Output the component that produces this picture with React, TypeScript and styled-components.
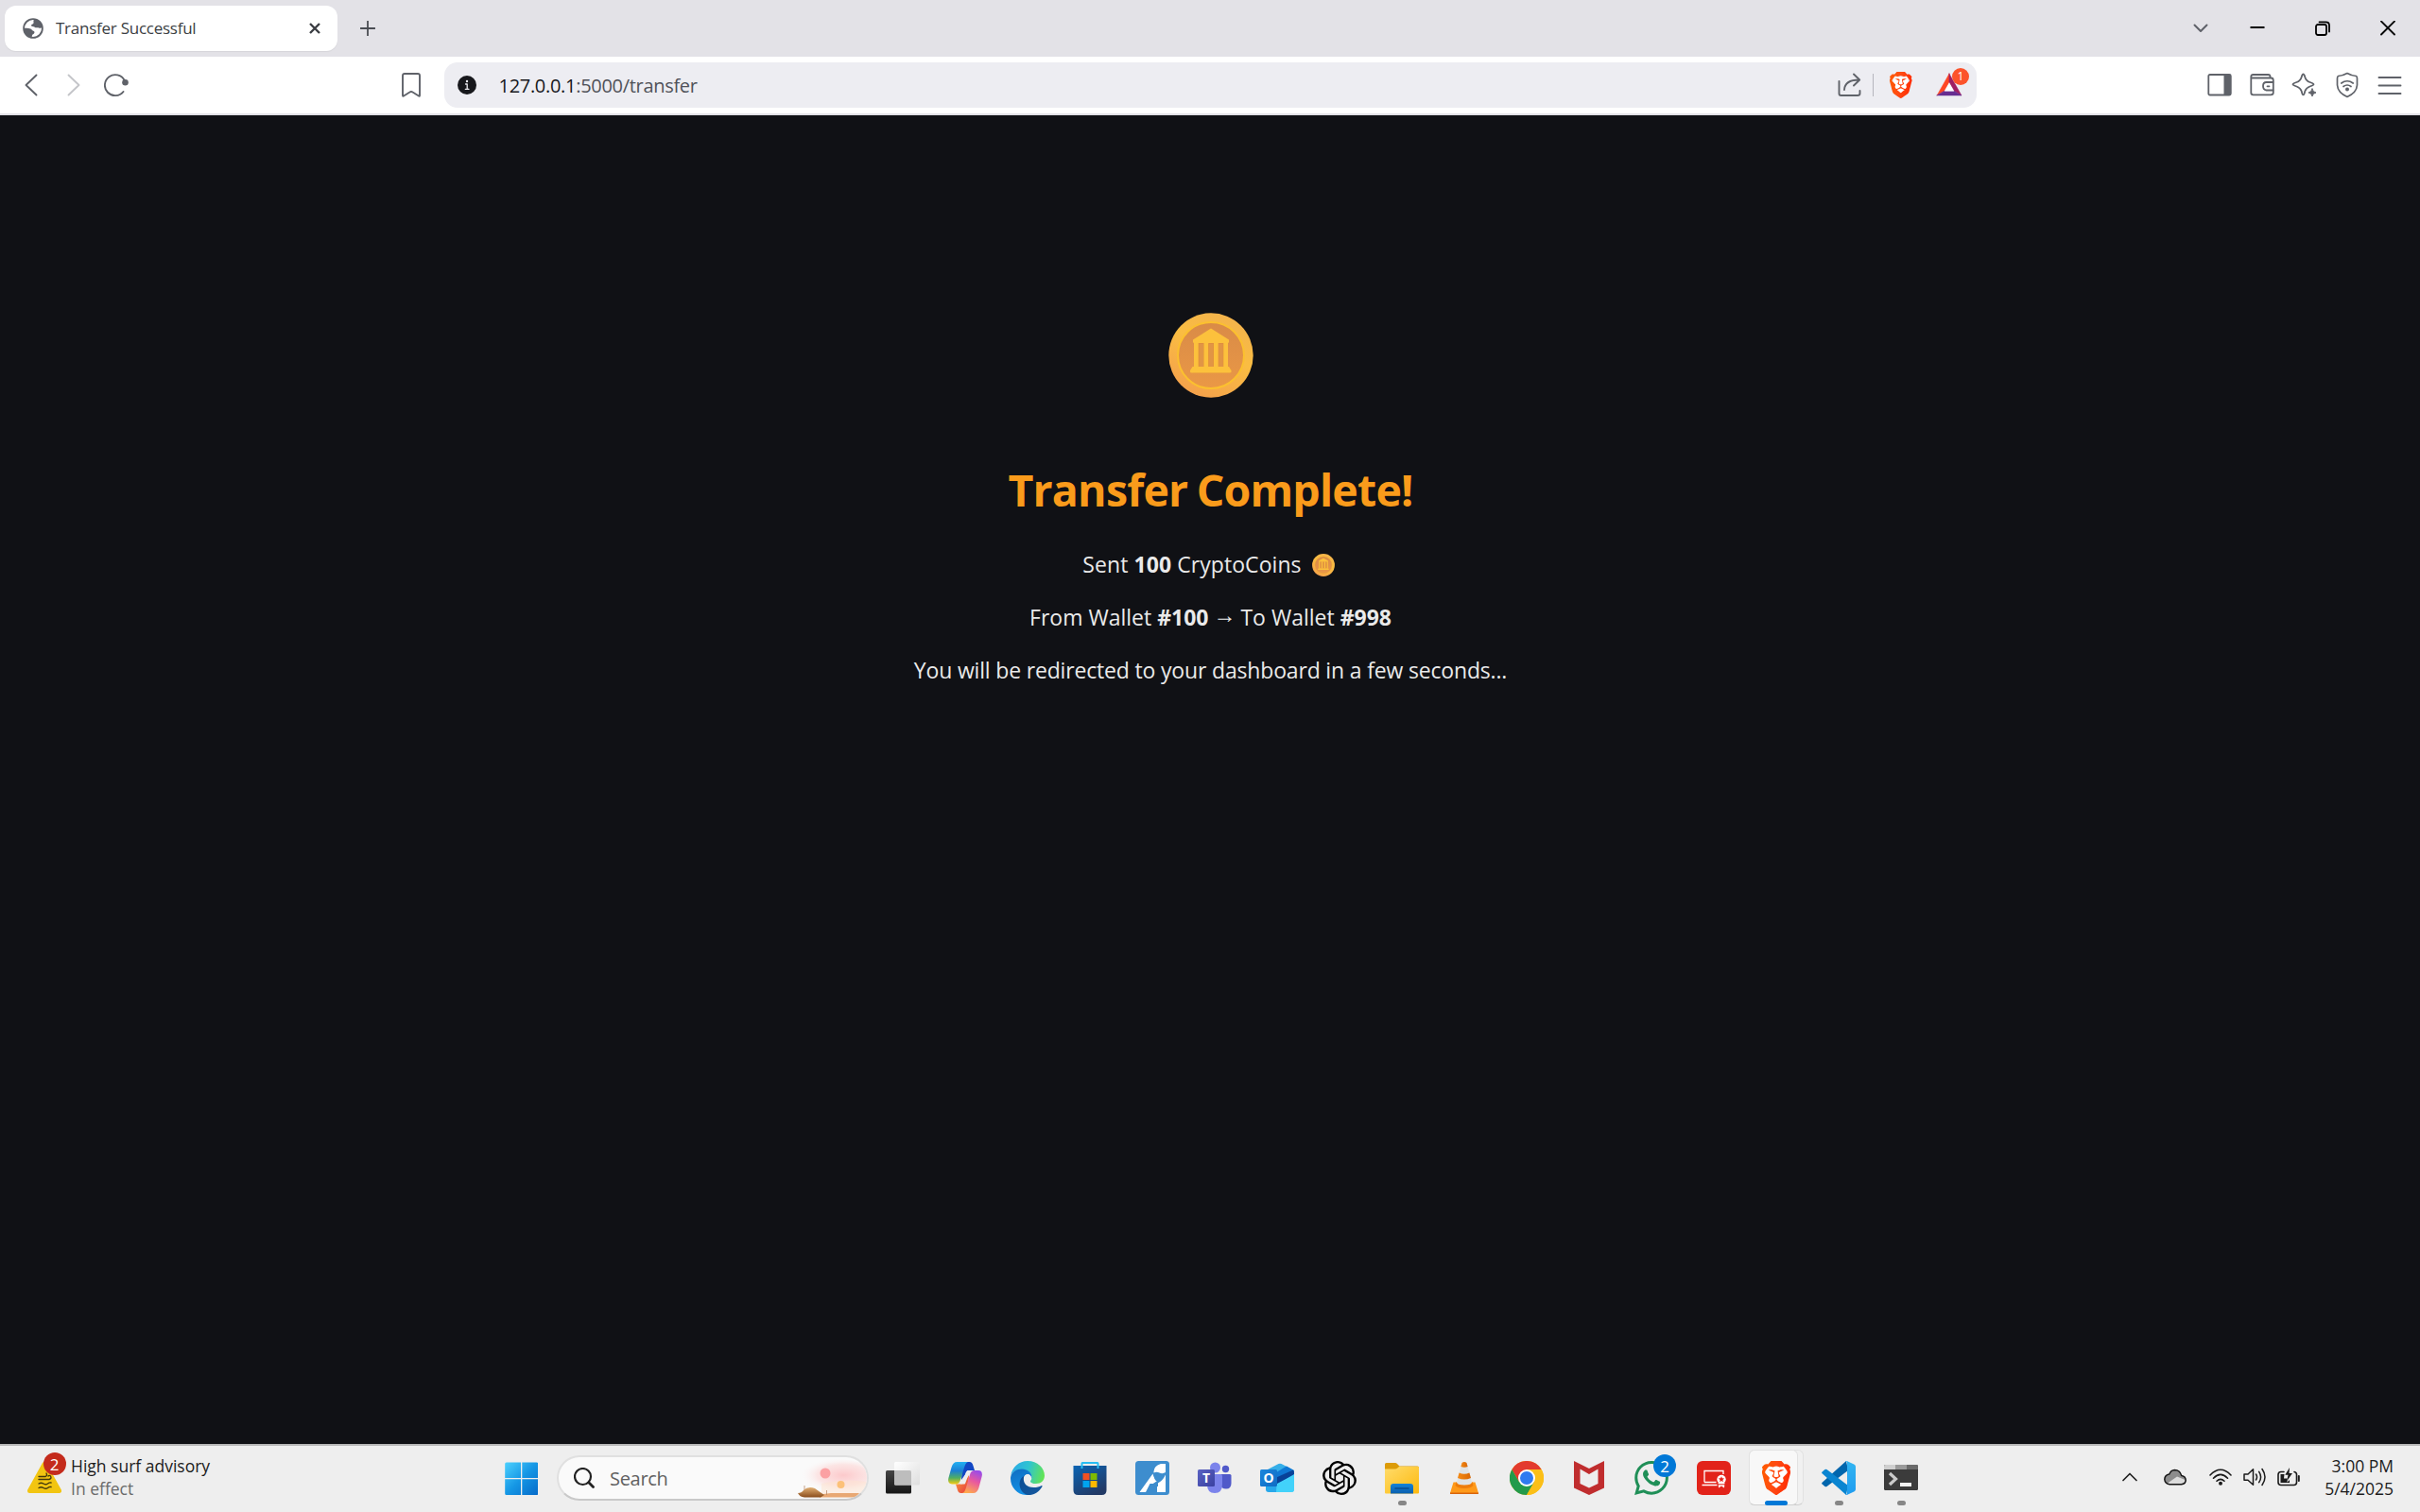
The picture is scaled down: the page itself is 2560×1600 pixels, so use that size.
import React from "react";
import styled, { createGlobalStyle, css } from "styled-components";
import { SiBrave, SiOpenai, SiWhatsapp } from "react-icons/si";

const GlobalStyle = createGlobalStyle`
  * { box-sizing: border-box; }
  body {
    margin: 0;
    background: #101115;
    font-family: "Open Sans", "Noto Sans", sans-serif;
    font-variant-ligatures: none;
  }
  svg { display: block; flex: none; }
`;

const Screen = styled.div`
  width: 2560px;
  height: 1600px;
  display: flex;
  flex-direction: column;
  overflow: hidden;
`;

/* ---------- browser chrome ---------- */

const TabStrip = styled.header`
  height: 60px;
  flex: none;
  display: flex;
  align-items: center;
  background: #e3e2e7;
  padding-left: 4.5px;
`;

const Tab = styled.div`
  width: 352.5px;
  height: 48px;
  display: flex;
  align-items: center;
  gap: 13px;
  padding: 0 18px 0 19.5px;
  border-radius: 12px;
  background: #fff;
  box-shadow: 0 1px 1px rgba(0, 0, 0, 0.06);
`;

const TabTitle = styled.span`
  flex: 1;
  padding-bottom: 2px;
  font-size: 17px;
  letter-spacing: -0.25px;
  color: #3b3e43;
  white-space: nowrap;
`;

const NewTab = styled.div`
  margin-left: 24px;
`;

const WindowControls = styled.div`
  margin-left: auto;
  display: flex;
  height: 100%;
`;

const ControlCell = styled.div<{ $width: number }>`
  width: ${(p) => p.$width}px;
  display: grid;
  place-items: center;
`;

const Toolbar = styled.nav`
  height: 62px;
  flex: none;
  display: flex;
  align-items: center;
  background: #fff;
  border-bottom: 2px solid #e2e1e6;
  padding: 0 9.5px 0 10.5px;
`;

const ToolGroup = styled.div<{ $end?: boolean }>`
  display: flex;
  ${(p) =>
    p.$end &&
    css`
      margin-left: auto;
    `}
`;

const ToolButton = styled.div`
  width: 45px;
  height: 48px;
  display: grid;
  place-items: center;
`;

const BookmarkSlot = styled(ToolButton)`
  margin: 0 12.5px 0 267px;
`;

const AddressBar = styled.div`
  width: 1621px;
  height: 48px;
  display: flex;
  align-items: center;
  padding: 0 15px 0 14px;
  border-radius: 14px;
  background: #ededf2;
`;

const Url = styled.span`
  flex: 1;
  margin-left: 23.5px;
  font-size: 20px;
  letter-spacing: -0.3px;
  color: #505259;
`;

const Host = styled.span`
  color: #17181c;
`;

const Divider = styled.i`
  width: 1px;
  height: 24px;
  margin: 0 15px 0 10px;
  background: #b5b5bd;
`;

const RewardsSlot = styled.div`
  position: relative;
  margin-left: 23px;
`;

const Badge = styled.span<{ $size: number; $x: number; $y: number; $bg: string; $font: number }>`
  position: absolute;
  left: ${(p) => p.$x - p.$size / 2}px;
  top: ${(p) => p.$y - p.$size / 2}px;
  width: ${(p) => p.$size}px;
  height: ${(p) => p.$size}px;
  border-radius: 50%;
  display: grid;
  place-items: center;
  background: ${(p) => p.$bg};
  color: #fff;
  font-size: ${(p) => p.$font}px;
  line-height: 1;
`;

/* ---------- page ---------- */

const Page = styled.main`
  flex: 1;
  display: flex;
  flex-direction: column;
  align-items: center;
  padding: 209px 0 0 1px;
  background: #101115;
  color: #eaeaea;
`;

const Title = styled.h1`
  margin: 65px 0 31px;
  font-size: 46.5px;
  line-height: 64px;
  font-weight: 700;
  letter-spacing: -0.8px;
  word-spacing: -2px;
  color: #fa9b1b;
`;

const Line = styled.p<{ $track?: number }>`
  margin: 0 0 24px;
  font-size: 23px;
  line-height: 32px;
  letter-spacing: ${(p) => p.$track ?? 0}px;
  white-space: nowrap;
`;

const InlineCoin = styled.span`
  display: inline-block;
  margin: 0 4px 0 5px;
  vertical-align: -4px;
`;

const Arrow = styled.span`
  display: inline-block;
  font-family: "Liberation Sans", sans-serif;
  font-size: 24px;
  width: 22px;
  line-height: 1;
  text-indent: -1px;
  vertical-align: 3px;
`;

/* ---------- taskbar ---------- */

const Taskbar = styled.footer`
  height: 72px;
  flex: none;
  display: grid;
  grid-template-columns: 518px 1fr auto;
  background: #eeeeee;
  border-top: 2px solid #b9b9b9;
`;

const Widget = styled.div`
  display: flex;
  align-items: center;
  gap: 10px;
  padding: 0 0 4px 29px;
`;

const IconBox = styled.div`
  position: relative;
  width: 36px;
  height: 36px;
`;

const Stack = styled.div<{ $right?: boolean }>`
  font-size: 17.5px;
  line-height: 24px;
  color: #1c1c1c;
  white-space: nowrap;
  ${(p) =>
    p.$right &&
    css`
      text-align: right;
      width: 93px;
    `}
`;

const Muted = styled.div`
  color: #6b6b6b;
`;

const AppRow = styled.div`
  display: flex;
  align-items: center;
`;

const AppCell = styled.div`
  position: relative;
  width: 66px;
  height: 70px;
  display: grid;
  place-items: center;
  padding-bottom: 2px;
`;

const Indicator = styled.i<{ $active?: boolean }>`
  position: absolute;
  bottom: 7px;
  left: ${(p) => (p.$active ? 21 : 28.5)}px;
  width: ${(p) => (p.$active ? 24 : 9)}px;
  height: 5px;
  border-radius: 3px;
  background: ${(p) => (p.$active ? "#0078d7" : "#868686")};
`;

const Card = styled.i<{ $back?: boolean }>`
  position: absolute;
  top: 4px;
  left: 4px;
  width: ${(p) => (p.$back ? 58 : 51.5)}px;
  height: 59px;
  border-radius: 6px;
  border: 1px solid #e2e2e2;
  border-bottom-color: #d0d0d0;
  background: ${(p) => (p.$back ? "#f1f1f1" : "#f8f8f8")};
`;

const Front = styled.div`
  position: relative;
`;

const SearchBox = styled.div`
  width: 330px;
  height: 48px;
  margin: 0 3px 2px 5px;
  display: flex;
  align-items: center;
  padding-left: 16px;
  border-radius: 24px;
  border: 2px solid #e0e0e0;
  border-bottom-color: #c9c9c9;
  background: #fafafa;
  overflow: hidden;
`;

const SearchText = styled.span`
  flex: 1;
  margin-left: 16px;
  font-size: 20px;
  letter-spacing: -0.3px;
  color: #616161;
`;

const Tray = styled.div`
  display: flex;
  align-items: center;
  padding: 0 28px 4px 0;
`;

const TrayCell = styled.div<{ $width: number; $gap?: number }>`
  width: ${(p) => p.$width}px;
  margin-right: ${(p) => p.$gap ?? 0}px;
  display: grid;
  place-items: center;
`;

/* ---------- icons ---------- */

const Svg = ({ w, h = w, children }: { w: number; h?: number; children: React.ReactNode }) => (
  <svg width={w} height={h} viewBox={`0 0 ${w} ${h}`} fill="none" strokeLinecap="round" strokeLinejoin="round">
    {children}
  </svg>
);

const GREY = "#5f6269";

const Coin = ({ size }: { size: number }) => (
  <svg width={size} height={size} viewBox="0 0 90 90">
    <defs>
      <linearGradient id="rim" x1="0.8" y1="0" x2="0.3" y2="1">
        <stop offset="0" stopColor="#f3b24d" />
        <stop offset="0.45" stopColor="#fabd42" />
        <stop offset="1" stopColor="#f4a04c" />
      </linearGradient>
      <linearGradient id="face" x1="0" y1="0" x2="0" y2="1">
        <stop offset="0" stopColor="#d98b47" />
        <stop offset="1" stopColor="#ea9846" />
      </linearGradient>
    </defs>
    <circle cx="45" cy="45" r="44.7" fill="url(#rim)" />
    <circle cx="45" cy="45" r="35" fill="url(#face)" stroke="#fbc02f" strokeWidth="2" />
    <g fill="#e08a2b" transform="translate(1 1.4)">
      <path d="M28 31 H62 V56 L65 58 V62 H25 V58 L28 56Z" opacity="0.45" />
    </g>
    <g fill="#fcc13c">
      <path d="M45 16.500 L64 28.500 V31 Q64 32 62.500 32 H27.500 Q26 32 26 31 V28.500Z" />
      <path d="M27 31h4.700v26H27zM37.500 31h4.700v26h-4.700zM48 31h4.700v26H48zM58.300 31h4.700v26h-4.700z" />
      <path d="M25.500 57 H64 L66.500 61 V62.500 Q66.500 63.500 65 63.500 H24.500 Q23 63.500 23 62.500 V61Z" />
    </g>
    <g fill="#e19545">
      <path d="M32.500 33h4.500v24h-4.500zM43 33h4.500v24H43zM53.300 33h4.500v24h-4.500z" />
    </g>
  </svg>
);

const Globe = () => (
  <Svg w={22}>
    <circle cx="11" cy="11" r="9.900" fill="#fff" stroke={GREY} strokeWidth="1.800" />
    <path
      d="M12.500 1.500C10.500 3 12 4.200 11.500 5.500C11 7 8.800 6.500 9 8C9.300 9.300 11.500 8.500 12.800 9.800C13.800 11 15.500 9.800 17 10.500C18.500 11.200 20 10.500 20.800 9.500C20 5 16.500 1.800 12.500 1.500Z"
      fill={GREY}
    />
    <path
      d="M1.200 11C3.500 10.500 6.500 10.600 8.300 11.500C10 12.300 9.700 13.300 11.300 13.800C13.300 14.500 12.500 16.800 11 17.200C9.800 17.600 9.800 19.500 9.500 20.700C4.800 20.200 1.200 16 1.200 11Z"
      fill={GREY}
    />
  </Svg>
);

const BraveLion = ({ w, h, id }: { w: number; h: number; id: string }) => (
  <svg width={w} height={h} viewBox="0 0 30 36">
    <defs>
      <linearGradient id={id} x1="0" y1="0.4" x2="1" y2="0.6">
        <stop offset="0" stopColor="#ff5a00" />
        <stop offset="0.45" stopColor="#ff4a14" />
        <stop offset="1" stopColor="#ff2a00" />
      </linearGradient>
    </defs>
    <path d="M6 7 L24 7 L25 20 L21 27 L15 31 L9 27 L5 20Z" fill="#fff" />
    <SiBrave x="-3" y="0" size={36} style={{ fill: `url(#${id})` }} />
  </svg>
);

const Bat = () => (
  <Svg w={28}>
    <path d="M14 2 L1 25 L8.500 20.500 L14 11Z" fill="#ff4724" stroke="#ff4724" strokeWidth="0.500" />
    <path d="M14 2 L27 25 L19.500 20.500 L14 11Z" fill="#9e1f63" stroke="#9e1f63" strokeWidth="0.500" />
    <path d="M1 25 H27 L19.500 20.500 H8.500Z" fill="#662d91" stroke="#662d91" strokeWidth="0.500" />
    <path d="M14 11.500 L19 20.500 H9Z" fill="#fff" />
  </Svg>
);

const StartIcon = () => (
  <svg width={36} height={36} viewBox="0 0 36 36">
    <defs>
      <linearGradient id="win" x1="0" y1="0" x2="36" y2="36" gradientUnits="userSpaceOnUse">
        <stop offset="0" stopColor="#4fd3ff" />
        <stop offset="0.5" stopColor="#1597e5" />
        <stop offset="1" stopColor="#0669c8" />
      </linearGradient>
    </defs>
    <g fill="url(#win)" transform="translate(0.7 0.5)">
      <path d="M2 1h15.300v16.500H.5v-15Q.5 1 2 1zM18.600 1H34q1.500 0 1.500 1.500v15H18.600zM.5 18.800h16.800V35.500H2Q.5 35.500.5 34zM18.600 18.800h16.900V34q0 1.500-1.500 1.500H18.600z" />
    </g>
  </svg>
);

const SearchArt = () => (
  <svg width={78} height={44} viewBox="0 0 78 44">
    <defs>
      <radialGradient id="haze" cx="0.6" cy="0.45" r="0.5">
        <stop offset="0" stopColor="#fcc9cb" />
        <stop offset="0.6" stopColor="#fce0df" stopOpacity="0.8" />
        <stop offset="1" stopColor="#fafafa" stopOpacity="0" />
      </radialGradient>
      <linearGradient id="sand" x1="0" y1="0" x2="0" y2="1">
        <stop offset="0" stopColor="#e2b074" />
        <stop offset="1" stopColor="#8a4d1c" />
      </linearGradient>
    </defs>
    <ellipse cx="44" cy="21" rx="46" ry="19" fill="url(#haze)" />
    <path d="M30 28 Q55 22 78 26 V40 H30Z" fill="#fde3cf" opacity="0.5" />
    <circle cx="34" cy="17" r="5.500" fill="#fba1a3" />
    <circle cx="50.500" cy="29" r="4" fill="#fcc178" />
    <path d="M28 39.500 L40 38 H70 L66 42.500 H28Z" fill="#e8a873" />
    <path d="M12 30v5M35.500 35v5" stroke="#b98a6a" strokeWidth="0.800" />
    <path d="M5 38 Q9 38 11 35 Q16 30 23 33 Q27 36 33 40 L29 42.500 H12 Q7 42 5 38Z" fill="url(#sand)" />
  </svg>
);

const TaskView = () => (
  <svg width={36} height={36} viewBox="0 0 36 36">
    <defs>
      <linearGradient id="tvb" x1="0" y1="0" x2="0" y2="1">
        <stop offset="0" stopColor="#454545" />
        <stop offset="1" stopColor="#161616" />
      </linearGradient>
      <linearGradient id="tvf" x1="0" y1="0" x2="1" y2="1">
        <stop offset="0" stopColor="#ffffff" />
        <stop offset="1" stopColor="#dedede" />
      </linearGradient>
    </defs>
    <rect x="0" y="10" width="27" height="24.500" rx="1.500" fill="url(#tvb)" />
    <rect x="9" y="1" width="27" height="24.500" rx="1.500" fill="url(#tvf)" />
    <path d="M9 10H25.500Q27 10 27 11.500V25.500H10.500Q9 25.500 9 24Z" fill="#bdbdbd" />
  </svg>
);

const Copilot = () => (
  <svg width={36} height={36} viewBox="0 0 36 36">
    <defs>
      <linearGradient id="cpl" x1="0" y1="0" x2="0" y2="1">
        <stop offset="0" stopColor="#22b0f2" />
        <stop offset="0.4" stopColor="#1b7fd4" />
        <stop offset="0.72" stopColor="#4fae62" />
        <stop offset="1" stopColor="#f6cb10" />
      </linearGradient>
      <linearGradient id="cpr" x1="0.7" y1="0" x2="0.3" y2="1">
        <stop offset="0" stopColor="#9a4ce8" />
        <stop offset="0.45" stopColor="#e8589f" />
        <stop offset="1" stopColor="#ffab4d" />
      </linearGradient>
      <linearGradient id="cpo" x1="0" y1="0" x2="1" y2="1">
        <stop offset="0" stopColor="#fba43a" />
        <stop offset="1" stopColor="#e6353f" />
      </linearGradient>
    </defs>
    <path d="M15 1h7.500c2.200 0 3.200 1.500 3.800 3.500L28 10h-4.500c-3 0-4.500 1.500-5.300 4L14 20z" fill="#1247c4" />
    <path d="M21 34h-7.500c-2.200 0-3-1.500-3.600-3.500L8 24.500h4.500c3 0 4.500-1 5.300-3.500L22 15z" fill="url(#cpo)" />
    <path d="M9.500 1H21c-2 .5-3 2.500-4 6l-4 13c-1 3-2 4.500-5.500 4.500H4C.8 24.500-.6 22 .4 18L3.600 6.500C4.600 3 6.500 1 9.500 1z" fill="url(#cpl)" />
    <path d="M26.500 34H15c2-.5 3-2.500 4-6l4-13.500c1-3 2-4.500 5.500-4.500H32c3.200 0 4.600 2.500 3.600 6.500L32.400 28.500c-1 3.500-2.900 5.500-5.900 5.500z" fill="url(#cpr)" />
    <path d="M20.500 10H24c-1 .5-1.700 2-2.300 4L18 24c-.5.500-1 .6-1.500.6H13c1.500-.6 2.300-2.500 3-4.600l2.200-6c.5-2 1.200-3.300 2.300-4z" fill="#eeeeee" />
  </svg>
);

const Edge = () => (
  <svg width={36} height={36} viewBox="0 0 36 36">
    <defs>
      <linearGradient id="edg" x1="0" y1="0.3" x2="1" y2="0.5">
        <stop offset="0" stopColor="#2aa9e8" />
        <stop offset="0.5" stopColor="#2fc4d0" />
        <stop offset="1" stopColor="#62e455" />
      </linearGradient>
      <linearGradient id="edb" x1="0" y1="0" x2="0.3" y2="1">
        <stop offset="0" stopColor="#0f6cc0" />
        <stop offset="1" stopColor="#1390e6" />
      </linearGradient>
      <linearGradient id="edd" x1="0" y1="0" x2="1" y2="1">
        <stop offset="0" stopColor="#0b4c94" />
        <stop offset="1" stopColor="#15599f" />
      </linearGradient>
    </defs>
    <path d="M.2 16C1.500 6.500 9 0 18 0c10.500 0 18 7.500 18 15.500 0 5-3.800 8.500-9 8.500-4 0-6-1.300-6-2.600 0-1 1.500-1.400 1.500-4C22.500 13 18 9 12 9 6 9 1.500 12 .2 16z" fill="url(#edg)" />
    <path d="M.1 17C1.500 11.500 6 8.500 12 8.500c6 0 10.500 4 10.500 8.500 0 .6-.1 1.200-.3 1.700C21.600 15.500 20 14 18 14c-3 .5-5 4-5 8 0 6 5 10.500 9 13.500C10 38.500-1 29 .1 17z" fill="url(#edb)" />
    <path d="M14.500 15.500c-2 4.500 0 12.500 10 12.500 3.500 0 6-.8 8-1.800.9-.4 1.400.2.9 1C30 33 24 36.500 18 36 12.500 34.500 9.500 29.500 9.500 24c0-3.500 2-7 5-8.500z" fill="url(#edd)" />
    <circle cx="18" cy="18" r="3.800" fill="#eeeeee" />
  </svg>
);

const Store = () => (
  <svg width={36} height={36} viewBox="0 0 36 36">
    <defs>
      <linearGradient id="bag" x1="0" y1="0" x2="0.6" y2="1">
        <stop offset="0" stopColor="#0a64b4" />
        <stop offset="1" stopColor="#223a66" />
      </linearGradient>
    </defs>
    <path d="M.5 5H35.500V31Q35.500 36 30.500 36H5.500Q.5 36 .5 31Z" fill="url(#bag)" />
    <path d="M9.500 8V2.500Q9.500 2 10 2H26Q26.500 2 26.500 2.500V8" fill="none" stroke="#27bdf3" strokeWidth="2" />
    <path d="M10.500 13h7v7h-7z" fill="#f25022" />
    <path d="M18.500 13h7v7h-7z" fill="#7fba00" />
    <path d="M10.500 21h7v7h-7z" fill="#00a4ef" />
    <path d="M18.500 21h7v7h-7z" fill="#ffb900" />
  </svg>
);

const AiTool = () => (
  <Svg w={36}>
    <rect width="36" height="36" rx="3.500" fill="#3d8dce" />
    <path d="M19.500 11 Q20 5 27 3 H32 V12 Q29 14 25.500 12.500 Q22.500 11 19.500 12.500Z" fill="#fff" />
    <path d="M4.500 33 L18.500 13.500 Q20 20 23 21 L19 24 H15.500 L11 33Z" fill="#fff" />
    <path d="M32 14.500 V33 H23 V24 Q29 21 32 14.500Z" fill="#fff" />
    <circle cx="24.500" cy="17.500" r="4" fill="#3d8dce" />
    <path d="M20 23 H24 V27 Q20 27 19 25Z" fill="#3d8dce" />
  </Svg>
);

const TeamsGlyph = styled.span`
  position: absolute;
  left: 0;
  top: 9px;
  width: 18px;
  height: 18px;
  border-radius: 1.5px;
  background: linear-gradient(135deg, #5a62c3, #3a41a0);
  color: #fff;
  font-weight: 700;
  font-size: 14px;
  line-height: 18px;
  text-align: center;
`;

const Teams = () => (
  <IconBox>
    <Svg w={36}>
      <circle cx="29.500" cy="8.500" r="3.700" fill="#5059c9" />
      <path d="M24 14h10q1.500 0 1.500 1.500v8q0 6-5.500 6t-6-5z" fill="#5059c9" />
      <circle cx="18.500" cy="7" r="5.500" fill="#7b83eb" />
      <path d="M10 14h14.500q1.500 0 1.500 1.500V25q0 9-8 9t-8-9z" fill="#7b83eb" />
    </Svg>
    <TeamsGlyph>T</TeamsGlyph>
  </IconBox>
);

const OutlookGlyph = styled(TeamsGlyph)`
  background: linear-gradient(135deg, #1a86dc, #0f6cc4);
`;

const Outlook = () => (
  <IconBox>
    <Svg w={36}>
      <path d="M8 9 L19.500 3 Q21 2.500 22.500 3 L36 10 V18 L18 24 L8 18Z" fill="#35aee8" />
      <path d="M14 14 L28 5.500 L35 9.500 L18 20Z" fill="#0f78d4" />
      <path d="M16 18 L35 9.500 Q36 10 36 14 L18 25Z" fill="#084298" />
      <path d="M36 14.500 V30 Q36 33 33 33 H15 L10 28 L18 24Z" fill="#47d3fb" />
      <path d="M6 22 L30 32.500 Q28 33 26 33 H9 Q6 33 6 30Z" fill="#28a8ea" />
      <path d="M17.500 25 L30 19 L36 14.500 V30 Q36 33 33 33 H17Z" fill="#42d2fa" />
    </Svg>
    <OutlookGlyph>O</OutlookGlyph>
  </IconBox>
);

const Folder = () => (
  <svg width={36} height={36} viewBox="0 0 36 36">
    <defs>
      <linearGradient id="fld" x1="0" y1="0" x2="1" y2="1">
        <stop offset="0" stopColor="#ffdc6b" />
        <stop offset="1" stopColor="#fdb90e" />
      </linearGradient>
      <linearGradient id="flb" x1="0" y1="0" x2="0" y2="1">
        <stop offset="0" stopColor="#1583d8" />
        <stop offset="1" stopColor="#0a5fae" />
      </linearGradient>
    </defs>
    <path d="M1.500 2H11q1 0 2 1l2.500 2.500H34.500Q36 5.500 36 7V12H0V3.500Q0 2 1.500 2z" fill="#dc9b07" />
    <path d="M0 8.500H11q1 0 2-.8L15 6H35q1 0 1 1V33.500Q36 34.500 35 34.500H1Q0 34.500 0 33.500Z" fill="url(#fld)" />
    <path d="M6 34.500V27q0-3 3-3H27q3 0 3 3v7.500z" fill="url(#flb)" />
    <path d="M11 29H25" stroke="#0a4c8f" strokeWidth="1.600" strokeLinecap="round" />
  </svg>
);

const Vlc = () => (
  <svg width={36} height={36} viewBox="0 0 36 36">
    <defs>
      <linearGradient id="vlc" x1="0" y1="0" x2="1" y2="0">
        <stop offset="0" stopColor="#f58a14" />
        <stop offset="1" stopColor="#d96704" />
      </linearGradient>
    </defs>
    <path d="M6.500 22.500H29.500L33 34Q33 35 32 35H4Q3 35 3 34Z" fill="#ff9a1a" />
    <path d="M3 33.500H33V34.500Q33 35 32 35H4Q3 35 3 34.500Z" fill="#d9640a" />
    <path d="M15.500 2Q18 0 20.500 2L26 22.500Q26 26 18 26T10 22.500Z" fill="#e0e3e5" />
    <path d="M15.500 2Q18 0 20.500 2L21.600 6Q18 7.500 14.400 6Z" fill="url(#vlc)" />
    <path d="M12.600 12.500Q18 15 23.400 12.500L25 18Q18 21 11 18Z" fill="url(#vlc)" />
    <path d="M9.600 22Q10 25.500 18 25.500T26.400 22L27.500 26Q25 29 18 29T8.500 26Z" fill="#ee7d0c" />
  </svg>
);

const Chrome = () => (
  <Svg w={36}>
    <circle cx="18" cy="18" r="18" fill="#fbbf17" />
    <path d="M2.400 9A18 18 0 0 1 33.600 9H18L10.200 22.500Z" fill="#e33b2e" />
    <path d="M2.400 9A18 18 0 0 0 18 36L25.800 22.500L18 18L10.200 22.500Z" fill="#239a4b" />
    <path d="M18 9H33.600A18 18 0 0 1 18 36L25.800 22.500Z" fill="#fbbf17" />
    <circle cx="18" cy="18" r="9" fill="#fff" />
    <circle cx="18" cy="18" r="7" fill="#2f7bf0" />
  </Svg>
);

const McAfee = () => (
  <Svg w={36}>
    <path d="M2 0L18 8L34 0V28.500L18 36L2 28.500Z" fill="#c02d2e" />
    <path d="M8.500 8.500L18 14L27.500 8.500V24L18 28.500L8.500 24Z" fill="#eee" />
  </Svg>
);

const RedRemote = () => (
  <Svg w={36}>
    <rect width="36" height="36" rx="6" fill="#e2231a" />
    <g stroke="#fff" strokeWidth="1.300" strokeLinecap="butt" strokeLinejoin="miter">
      <path d="M8 22.500V10.500H28V14" />
      <path d="M8 22.500H20.500M5.500 25.500H21.500" />
    </g>
    <circle cx="26" cy="19.500" r="4.700" fill="#fff" />
    <path d="M22.500 23L23 28.500L26 26.500L29 28.500L29.500 23Z" fill="#fff" />
    <path d="M26 16.300l.9 2 2.200.2-1.700 1.500.5 2.200-1.900-1.200-1.900 1.200.5-2.200-1.700-1.500 2.200-.2z" fill="#e2231a" />
    <path d="M22 24.800H30" stroke="#e2231a" strokeWidth="1" />
  </Svg>
);

const VsCode = () => (
  <svg width={36} height={36} viewBox="0 0 36 36">
    <defs>
      <linearGradient id="vsr" x1="0" y1="0" x2="0" y2="1">
        <stop offset="0" stopColor="#32b5f1" />
        <stop offset="1" stopColor="#1f9cf0" />
      </linearGradient>
    </defs>
    <path d="M26 0L28 10L5.500 27Q4.500 27.700 3.500 27L.6 24.500Q-.3 23.600.6 22.700Z" fill="#0166ad" />
    <path d="M26 36L28 26L5.500 9Q4.500 8.300 3.500 9L.6 11.500Q-.3 12.400.6 13.300Z" fill="#0a85d1" />
    <path d="M25 0.300Q26 -.3 27.200.2L34.700 3.700Q36 4.500 36 6V30Q36 31.500 34.700 32.300L27.200 35.800Q26 36.300 25 35.700Q27 36 27 34V2Q27 0 25 .3Z" fill="url(#vsr)" />
  </svg>
);

const Terminal = () => (
  <svg width={36} height={36} viewBox="0 0 36 36">
    <rect x="0" y="4" width="36" height="27" rx="1.500" fill="#3b3b3b" />
    <path d="M1.500 4H12V9H0V5.500Q0 4 1.500 4z" fill="#cfcfcf" />
    <path d="M12 4H24V9H12z" fill="#9a9a9a" />
    <path d="M24 4H34.500Q36 4 36 5.500V9H24z" fill="#6a6a6a" />
    <path d="M6 13L12.500 19L6 25" fill="none" stroke="#cbcbcb" strokeWidth="3.200" />
    <path d="M17 23H29V27H17z" fill="#f2f2f2" />
  </svg>
);

const WeatherIcon = () => (
  <Svg w={36}>
    <path d="M18 4.500L33.500 32.500H2.500Z" fill="#f2c511" stroke="#f2c511" strokeWidth="5" />
    <g stroke="#43390d" strokeWidth="1.400">
      <path d="M12 17.500H19q2.500-1 1-3.500M12 20.500H23q3-1 1.500-3.500q-1.500-1.300-2.500 0" />
      <path d="M12 25q2.500-1.500 5 0t4.500 0t3.500-1M12 29.500q2.500-1.500 5 0t4.500 0t3.500-1" />
    </g>
  </Svg>
);

/* Taskbar entries in display order. */
const apps: { name: string; icon: React.ReactNode; running?: boolean; active?: boolean }[] = [
  { name: "task-view", icon: <TaskView /> },
  { name: "copilot", icon: <Copilot /> },
  { name: "edge", icon: <Edge /> },
  { name: "store", icon: <Store /> },
  { name: "ai-tool", icon: <AiTool /> },
  { name: "teams", icon: <Teams /> },
  { name: "outlook", icon: <Outlook /> },
  { name: "chatgpt", icon: <SiOpenai size={36} color="#000" /> },
  { name: "explorer", icon: <Folder />, running: true },
  { name: "vlc", icon: <Vlc /> },
  { name: "chrome", icon: <Chrome /> },
  { name: "mcafee", icon: <McAfee /> },
  {
    name: "whatsapp",
    icon: (
      <IconBox>
        <SiWhatsapp size={36} color="#1f8f57" />
        <Badge $size={24} $x={32} $y={5} $bg="#0078d7" $font={17}>
          2
        </Badge>
      </IconBox>
    ),
  },
  { name: "remote", icon: <RedRemote /> },
  { name: "brave", icon: <BraveLion w={30} h={36} id="lionBar" />, running: true, active: true },
  { name: "vscode", icon: <VsCode />, running: true },
  { name: "terminal", icon: <Terminal />, running: true },
];

export default function App() {
  return (
    <Screen>
      <GlobalStyle />
      <TabStrip>
        <Tab>
          <Globe />
          <TabTitle>Transfer Successful</TabTitle>
          <Svg w={12}>
            <path d="M1 1L11 11M11 1L1 11" stroke="#3b3e43" strokeWidth="2.400" strokeLinecap="butt" />
          </Svg>
        </Tab>
        <NewTab>
          <Svg w={16}>
            <path d="M8 .5V15.500M.5 8H15.500" stroke="#4a4d53" strokeWidth="1.800" />
          </Svg>
        </NewTab>
        <WindowControls>
          <ControlCell $width={51}>
            <Svg w={16} h={10}>
              <path d="M1.500 1.500L8 8L14.500 1.500" stroke={GREY} strokeWidth="2" />
            </Svg>
          </ControlCell>
          <ControlCell $width={69}>
            <Svg w={16} h={4}>
              <path d="M.5 1H15.500" stroke="#000" strokeWidth="2" strokeLinecap="butt" />
            </Svg>
          </ControlCell>
          <ControlCell $width={69}>
            <Svg w={16}>
              <rect x="1" y="4" width="11" height="11" rx="2" stroke="#000" strokeWidth="1.800" />
              <path d="M4.500 1.300H11.500Q15 1.300 15 4.800V11.500" stroke="#000" strokeWidth="1.800" />
            </Svg>
          </ControlCell>
          <ControlCell $width={69}>
            <Svg w={16}>
              <path d="M1 0.500L15 14.500M15 0.500L1 14.500" stroke="#000" strokeWidth="1.800" />
            </Svg>
          </ControlCell>
        </WindowControls>
      </TabStrip>

      <Toolbar>
        <ToolGroup>
          <ToolButton>
            <Svg w={26}>
              <path d="M18.500 2.500L7.500 13L18.500 23.500" stroke={GREY} strokeWidth="1.900" />
            </Svg>
          </ToolButton>
          <ToolButton>
            <Svg w={26}>
              <path d="M7.500 2.500L18.500 13L7.500 23.500" stroke="#c4c5c9" strokeWidth="1.900" />
            </Svg>
          </ToolButton>
          <ToolButton>
            <Svg w={26}>
              <path d="M21.600 8A11 11 0 1 0 20.500 20" stroke={GREY} strokeWidth="1.900" />
              <circle cx="22.500" cy="10.300" r="3.300" fill={GREY} />
            </Svg>
          </ToolButton>
        </ToolGroup>
        <BookmarkSlot>
          <Svg w={26}>
            <path
              d="M6 1H20Q22 1 22 3V24Q22 25.300 20.500 24.300L14.500 20.500Q13 19.500 11.500 20.500L5.500 24.300Q4 25.300 4 24V3Q4 1 6 1Z"
              stroke={GREY}
              strokeWidth="1.900"
            />
          </Svg>
        </BookmarkSlot>
        <AddressBar>
          <Svg w={20}>
            <circle cx="10" cy="10" r="10" fill="#17181c" />
            <circle cx="10" cy="6" r="1.200" fill="#ededf2" />
            <path d="M8.500 9H10.200V14M8.300 14.300H12" stroke="#ededf2" strokeWidth="1.300" />
          </Svg>
          <Url>
            <Host>127.0.0.1</Host>:5000/transfer
          </Url>
          <Svg w={28}>
            <path d="M2.500 10V23Q2.500 25 4.500 25H22Q24.500 25 24.500 23V20" stroke={GREY} strokeWidth="1.900" />
            <path d="M8 19Q8.500 8.500 24 8.500M18 2.500L24.200 8.500L18 14.500" stroke={GREY} strokeWidth="1.900" />
          </Svg>
          <Divider />
          <ControlCell $width={28}>
            <BraveLion w={23.5} h={28} id="lionTool" />
          </ControlCell>
          <RewardsSlot>
            <Bat />
            <Badge $size={18} $x={26} $y={5} $bg="#fc532b" $font={12}>
              1
            </Badge>
          </RewardsSlot>
        </AddressBar>
        <ToolGroup $end>
          <ToolButton>
            <Svg w={28}>
              <rect x="2.300" y="3" width="23.500" height="21.500" rx="1.500" stroke={GREY} strokeWidth="1.800" />
              <path d="M18.500 3H26V24.500H18.500Z" fill={GREY} />
            </Svg>
          </ToolButton>
          <ToolButton>
            <Svg w={28}>
              <path
                d="M2.300 5V22Q2.300 24.300 4.600 24.300H23Q25.800 24.300 25.800 22V9Q25.800 6.500 23.500 6.500H3.500M2.300 5Q2.300 3 4.500 3H20.500Q22.500 3 22.500 5V6"
                stroke={GREY}
                strokeWidth="1.800"
              />
              <path d="M25.500 11H18.500Q15 11 15 15T18.500 19.500H25.500" stroke={GREY} strokeWidth="1.800" />
              <path d="M19.500 15.300H21.500" stroke={GREY} strokeWidth="1.800" />
            </Svg>
          </ToolButton>
          <ToolButton>
            <Svg w={28}>
              <path
                d="M12.500 2.500Q13.500 2.500 14.300 5.500Q15.500 9.700 19.500 11Q23.500 12.300 23.500 13.300Q23.500 14.300 19.500 15.500Q15.500 17 14.300 20.500Q13.500 24.300 12.500 24.300T10.700 20.500Q9.500 17 5.500 15.500Q1.500 14.300 1.500 13.300Q1.500 12.300 5.500 11Q9.500 9.700 10.700 5.500Q11.500 2.500 12.500 2.500Z"
                stroke={GREY}
                strokeWidth="1.800"
              />
              <path d="M22 18Q22.500 21.500 26 22Q22.500 22.500 22 26Q21.500 22.500 18 22Q21.500 21.500 22 18Z" fill={GREY} stroke={GREY} strokeWidth="1" />
            </Svg>
          </ToolButton>
          <ToolButton>
            <Svg w={28}>
              <path
                d="M14 1.500Q19 4.300 23.500 4.500Q24.500 5 24.500 7V14Q24 22 14 26.500Q4 22 3.500 14V7Q3.500 5 4.500 4.500Q9 4.300 14 1.500Z"
                stroke={GREY}
                strokeWidth="1.700"
              />
              <path d="M7.800 12Q14 7.500 20.200 12M10 15.500Q14 12.500 18 15.500" stroke={GREY} strokeWidth="1.700" />
              <circle cx="14" cy="18.500" r="2" fill={GREY} />
            </Svg>
          </ToolButton>
          <ToolButton>
            <Svg w={28}>
              <path d="M2.500 6H25.500M2.500 14.500H25.500M2.500 23H25.500" stroke={GREY} strokeWidth="1.900" />
            </Svg>
          </ToolButton>
        </ToolGroup>
      </Toolbar>

      <Page>
        <Coin size={90} />
        <Title>Transfer Complete!</Title>
        <Line $track={0.07}>
          Sent <b>100</b> CryptoCoins{" "}
          <InlineCoin>
            <Coin size={24} />
          </InlineCoin>
        </Line>
        <Line>
          From Wallet <b>#100</b> <Arrow>→</Arrow> To Wallet <b>#998</b>
        </Line>
        <Line $track={-0.17}>You will be redirected to your dashboard in a few seconds...</Line>
      </Page>

      <Taskbar>
        <Widget>
          <IconBox>
            <WeatherIcon />
            <Badge $size={24} $x={28.5} $y={4} $bg="#c42b1c" $font={17}>
              2
            </Badge>
          </IconBox>
          <Stack>
            <div>High surf advisory</div>
            <Muted>In effect</Muted>
          </Stack>
        </Widget>
        <AppRow>
          <AppCell>
            <StartIcon />
          </AppCell>
          <SearchBox>
            <Svg w={22}>
              <circle cx="9.500" cy="9.500" r="8.500" stroke="#222" strokeWidth="2.200" />
              <path d="M15.800 15.800L20.500 20.500" stroke="#222" strokeWidth="2.800" />
            </Svg>
            <SearchText>Search</SearchText>
            <SearchArt />
          </SearchBox>
          {apps.map((app) => (
            <AppCell key={app.name}>
              {app.active && (
                <>
                  <Card $back />
                  <Card />
                </>
              )}
              <Front>{app.icon}</Front>
              {app.running && <Indicator $active={app.active} />}
            </AppCell>
          ))}
        </AppRow>
        <Tray>
          <TrayCell $width={48}>
            <Svg w={18} h={12}>
              <path d="M2 9.500L9 2.500L16 9.500" stroke="#222" strokeWidth="1.700" />
            </Svg>
          </TrayCell>
          <TrayCell $width={48} $gap={6}>
            <Svg w={24} h={18}>
              <path
                d="M6 16.700H18.500Q23.200 16.200 23.200 12.200Q23 8.300 18.700 7.500Q17 1.500 11.500 1.500Q7.500 1.700 5.800 6Q1 6.800.8 11.500Q1.200 16 6 16.700Z"
                fill="#8c8c8c"
              />
              <path d="M4 15.500L14 8.500L22.500 12Q22 16.500 18.500 16.700H6Z" fill="#dcdcdc" />
              <path
                d="M6 16.700H18.500Q23.200 16.200 23.200 12.200Q23 8.300 18.700 7.500Q17 1.500 11.500 1.500Q7.500 1.700 5.800 6Q1 6.800.8 11.500Q1.200 16 6 16.700Z"
                stroke="#151515"
                strokeWidth="1.500"
              />
            </Svg>
          </TrayCell>
          <TrayCell $width={36}>
            <Svg w={24} h={18}>
              <path d="M1 7Q12 -4.500 23 7M4.500 10.200Q12 2.500 19.500 10.200M8 13.300Q12 9.300 16 13.300" stroke="#1b1b1b" strokeWidth="1.600" />
              <circle cx="12" cy="15.700" r="2" fill="#1b1b1b" />
            </Svg>
          </TrayCell>
          <TrayCell $width={36}>
            <Svg w={24} h={20}>
              <path d="M1 7H5L10.500 1.800V18.200L5 13.300H1Z" stroke="#1b1b1b" strokeWidth="1.500" />
              <path d="M13.500 7Q15.500 10 13.500 13M16.700 4.300Q20.500 10 16.700 15.700M20 1.500Q26 10 20 18.500" stroke="#1b1b1b" strokeWidth="1.500" />
            </Svg>
          </TrayCell>
          <TrayCell $width={36}>
            <Svg w={24} h={20}>
              <path d="M7 4.500H4Q1 4.500 1 7.500V15.500Q1 18.500 4 18.500H17.500Q20.500 18.500 20.500 15.500V7.500Q20.500 5 18 4.500" stroke="#1b1b1b" strokeWidth="1.600" />
              <path d="M22.800 9V14" stroke="#1b1b1b" strokeWidth="2" />
              <path d="M3.500 7H7.500L7 11.500H10.500V15.500L13 13V16H3.500Z" fill="#1b1b1b" />
              <path d="M13 0L8.300 7.800H11.500L10 14.500L16 6H12.500Z" fill="#1b1b1b" />
            </Svg>
          </TrayCell>
          <Stack $right>
            <div>3:00 PM</div>
            <div>5/4/2025</div>
          </Stack>
        </Tray>
      </Taskbar>
    </Screen>
  );
}
